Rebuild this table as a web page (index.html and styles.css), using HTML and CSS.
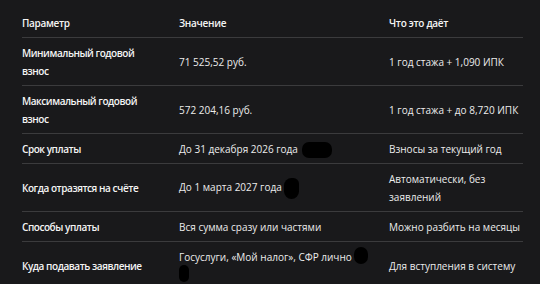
FILE: index.html
```html
<!DOCTYPE html>
<html lang="ru">
<head>
<meta charset="utf-8">
<link rel="stylesheet" href="styles.css">
</head>
<body>
<div class="wrap">
<table class="tbl">
  <colgroup><col class="c1"><col class="c2"><col class="c3"></colgroup>
  <thead>
    <tr><th>Параметр</th><th>Значение</th><th>Что это даёт</th></tr>
  </thead>
  <tbody>
    <tr><td class="k">Минимальный годовой взнос</td><td>71 525,52 руб.</td><td>1 год стажа + 1,090 ИПК</td></tr>
    <tr><td class="k">Максимальный годовой взнос</td><td>572 204,16 руб.</td><td>1 год стажа + до 8,720 ИПК</td></tr>
    <tr><td class="k">Срок уплаты</td><td>До 31 декабря 2026 года <span class="blob b1"></span></td><td>Взносы за текущий год</td></tr>
    <tr><td class="k">Когда отразятся на счёте</td><td>До 1 марта 2027 года <span class="blob b2"></span></td><td>Автоматически, без заявлений</td></tr>
    <tr><td class="k">Способы уплаты</td><td>Вся сумма сразу или частями</td><td>Можно разбить на месяцы</td></tr>
    <tr><td class="k">Куда подавать заявление</td><td>Госуслуги, «Мой налог», СФР лично<span class="blob b3"></span><br><span class="blob b4"></span></td><td>Для вступления в систему</td></tr>
  </tbody>
</table>
</div>
</body>
</html>
```
FILE: styles.css
```css
html, body {
  margin: 0;
  padding: 0;
  background: #19191b;
  overflow: hidden;
}
.wrap {
  padding: 8px 17px 0 22px;
}
.tbl {
  width: 501px;
  border-collapse: collapse;
  table-layout: fixed;
  font-family: "Open Sans", "Noto Sans", sans-serif;
  font-size: 10px;
  line-height: 18px;
  color: #ececec;
}
.c1 { width: 157px; }
.c2 { width: 210px; }
.c3 { width: 134px; }
th, td {
  text-align: left;
  padding: 6px 8px 5px 0;
  border-bottom: 1px solid #3b3b3d;
  vertical-align: middle;
}
th:first-child, td:first-child { padding-right: 22px; }
th:last-child, td:last-child { padding-right: 0; }
th {
  font-weight: 600;
  color: #f4f4f4;
  letter-spacing: -0.3px;
}
td.k {
  font-weight: 600;
  color: #f4f4f4;
  letter-spacing: -0.45px;
}
tbody tr:last-child td { border-bottom: none; }
.blob {
  display: inline-block;
  background: #000;
  vertical-align: middle;
}
.b1 { width: 30px; height: 16px; border-radius: 7px; margin-left: 2px; }
.b2 { width: 15px; height: 21px; border-radius: 8px 6px 8px 8px; }
.b3 { width: 14px; height: 17px; border-radius: 7px; margin-left: 2px; vertical-align: top; margin-top: -1px; }
.b4 { width: 10px; height: 17px; border-radius: 6px; vertical-align: top; margin-top: -1px; }
```
